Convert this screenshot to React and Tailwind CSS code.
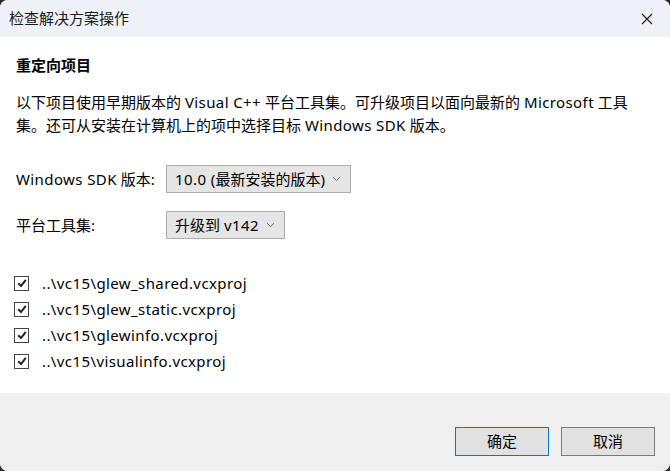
import React from "react";

const font = { fontFamily: '"Noto Sans", "Noto Sans CJK SC", sans-serif' };

const projects = [
  "..\\vc15\\glew_shared.vcxproj",
  "..\\vc15\\glew_static.vcxproj",
  "..\\vc15\\glewinfo.vcxproj",
  "..\\vc15\\visualinfo.vcxproj",
];

// latin runs are a bit wider in the original UI font
function L({ children }) {
  return <span className="tracking-[0.4px]">{children}</span>;
}

function Chevron() {
  return (
    <svg width="9" height="6" viewBox="0 0 9 6" className="shrink-0">
      <path d="M1 1.2 L4.5 4.6 L8 1.2" fill="none" stroke="#6b6b6b" strokeWidth="1" />
    </svg>
  );
}

function Select({ width, children }) {
  return (
    <div
      className="h-[28px] flex items-center justify-between pl-[8px] pr-[9px] bg-[#e5e5e5] border border-[#adadad]"
      style={{ width }}
    >
      <span>{children}</span>
      <Chevron />
    </div>
  );
}

function CheckBox() {
  return (
    <div className="w-[15px] h-[15px] border border-[#444] bg-white flex items-center justify-center">
      <svg width="10" height="10" viewBox="0 0 10 10">
        <path d="M1.2 5.2 L4 8 L8.8 1.8" fill="none" stroke="#222" strokeWidth="2" />
      </svg>
    </div>
  );
}

export default function App() {
  return (
    <div className="w-[670px] h-[471px] bg-[#2b2b2b] text-[15px] text-black" style={font}>
      <div className="w-full h-full rounded-[8px] overflow-hidden flex flex-col bg-white">
        {/* title bar */}
        <div className="h-[37px] shrink-0 bg-[#eff1f8] flex items-center justify-between pl-[9px] pr-[17px]">
          <span className="text-[15px] text-[#1a1a1a]">检查解决方案操作</span>
          <svg width="12" height="12" viewBox="0 0 12 12">
            <path d="M1 1 L11 11 M11 1 L1 11" stroke="#1a1a1a" strokeWidth="1.1" />
          </svg>
        </div>

        {/* body */}
        <div className="flex-1 pl-[16px] pr-[16px] leading-[23px]">
          <div className="mt-[17px] font-bold">重定向项目</div>
          <p className="mt-[14px]">
            以下项目使用早期版本的 <L>Visual C++</L> 平台工具集。可升级项目以面向最新的 <L>Microsoft</L> 工具集。还可从安装在计算机上的项中选择目标 <L>Windows SDK</L> 版本。
          </p>

          <div className="mt-[28px] flex items-center">
            <span className="w-[150px]"><L>Windows SDK</L> 版本:</span>
            <Select width={185}><L>10.0 (</L>最新安装的版本)</Select>
          </div>
          <div className="mt-[18px] flex items-center">
            <span className="w-[150px]">平台工具集:</span>
            <Select width={119}>升级到 <L>v142</L></Select>
          </div>

          <div className="mt-[31px] flex flex-col">
            {projects.map((p) => (
              <div key={p} className="h-[26px] flex items-center gap-[13px] -ml-[2px]">
                <CheckBox />
                <L>{p}</L>
              </div>
            ))}
          </div>
        </div>

        {/* footer */}
        <div className="h-[78px] shrink-0 bg-[#f0f0f0] flex justify-end items-start pt-[34px] pr-[15px] gap-[12px]">
          <button className="w-[94px] h-[29px] bg-[#e1e1e1] border border-[#0078d7] flex items-center justify-center">
            确定
          </button>
          <button className="w-[94px] h-[29px] bg-[#e1e1e1] border border-[#7a7a7a] flex items-center justify-center">
            取消
          </button>
        </div>
      </div>
    </div>
  );
}
